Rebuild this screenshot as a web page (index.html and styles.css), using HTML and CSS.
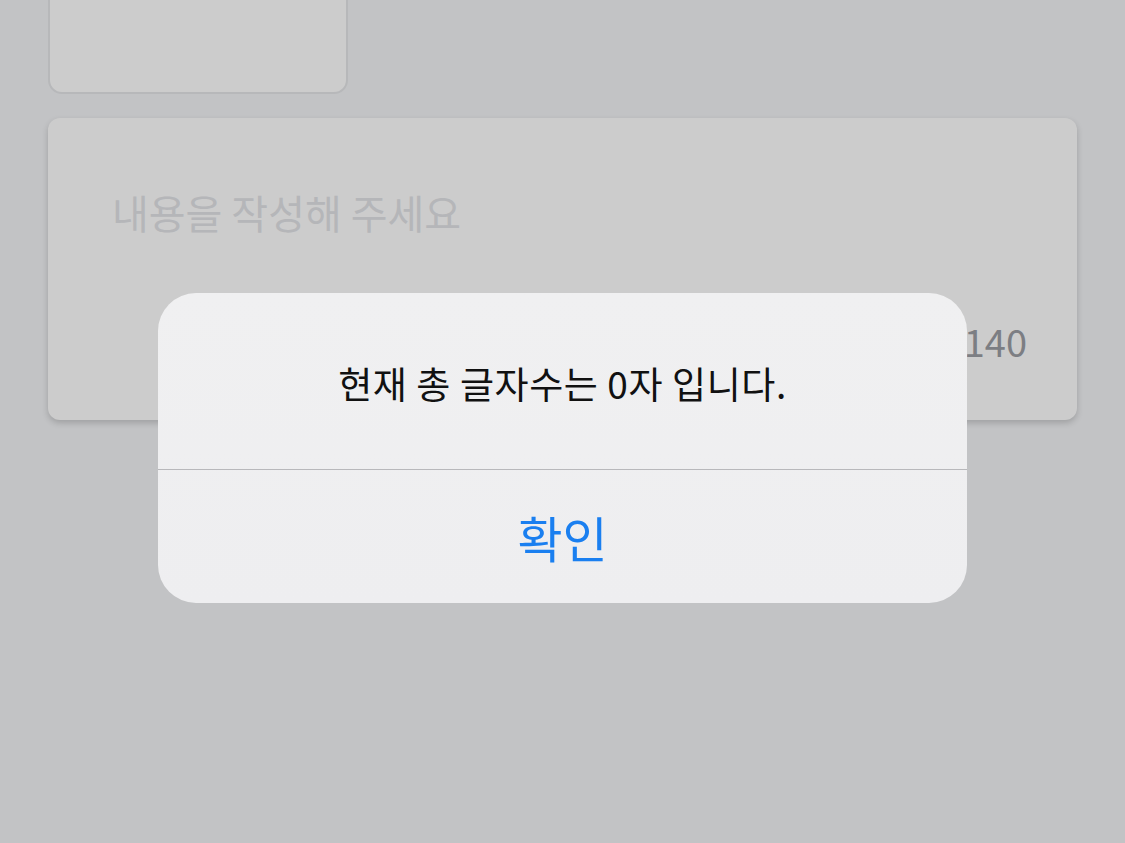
FILE: index.html
```html
<!DOCTYPE html>
<html>
<head>
    <title>글쓰기</title>
    <link rel="stylesheet" href="styles.css">
</head>
<body>
    <div class="page">
        <div class="photo-box"></div>

        <div class="write-card">
            <div class="placeholder">내용을 작성해 주세요</div>
            <div class="counter">0/140</div>
        </div>
    </div>

    <div class="alert">
        <div class="alert-message">현재 총 글자수는 0자 입니다.</div>
        <div class="alert-button">확인</div>
    </div>
</body>
</html>
```

FILE: styles.css
```css
html, body {
    margin: 0;
    height: 100%;
}

body {
    background-color: #c2c3c5;
    font-family: "Noto Sans CJK KR", "Noto Sans", sans-serif;
    overflow: hidden;
    position: relative;
}

.page {
    padding: 0 48px 0 48px;
}

.photo-box {
    width: 296px;
    height: 120px;
    margin-top: -30px;
    background-color: #cccccc;
    border: 2px solid #b7b8ba;
    border-radius: 14px;
}

.write-card {
    margin-top: 24px;
    height: 302px;
    background-color: #cccccc;
    border-radius: 12px;
    box-shadow: 0 3px 6px rgba(0, 0, 0, 0.18);
    display: flex;
    flex-direction: column;
    justify-content: space-between;
    padding: 70px 50px 55px 64px;
    box-sizing: border-box;
}

.placeholder {
    font-size: 40px;
    line-height: 48px;
    color: #b5b6b9;
}

.counter {
    align-self: flex-end;
    font-size: 38px;
    line-height: 48px;
    color: #7c7e83;
}

.alert {
    position: absolute;
    top: 293px;
    left: 158px;
    width: 809px;
    height: 310px;
    border-radius: 38px;
    background: linear-gradient(#f0f0f1, #eeeef0);
    display: flex;
    flex-direction: column;
    overflow: hidden;
}

.alert-message {
    height: 177px;
    padding-top: 3px;
    box-sizing: border-box;
    display: flex;
    align-items: center;
    justify-content: center;
    font-size: 37px;
    letter-spacing: 0.6px;
    color: #111111;
    border-bottom: 1px solid #b8b8bb;
}

.alert-button {
    flex: 1;
    display: flex;
    align-items: center;
    justify-content: center;
    font-size: 49px;
    color: #1a7ff0;
}
```
